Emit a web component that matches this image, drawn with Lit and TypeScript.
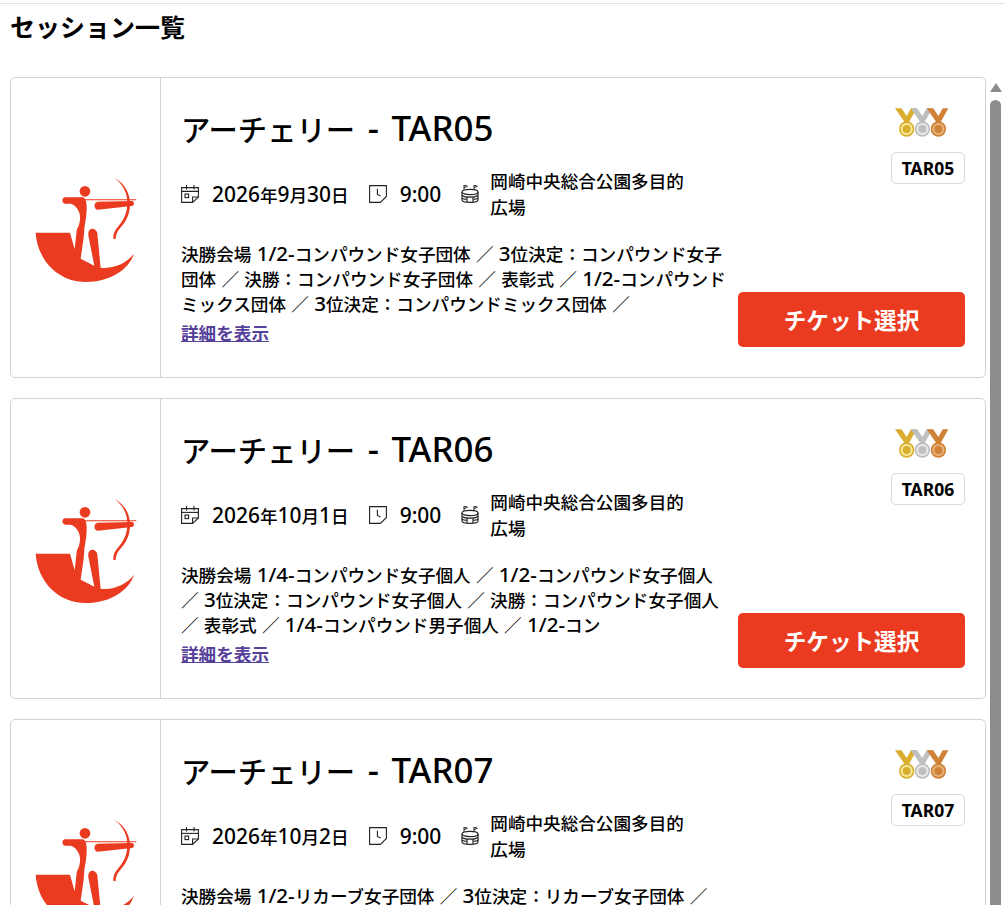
import { LitElement, html, css, svg } from "lit";
import { customElement } from "lit/decorators.js";

const sessions = [
  {
    code: "TAR05",
    date: "2026年9月30日",
    desc: "決勝会場 1/2-コンパウンド女子団体 ／ 3位決定：コンパウンド女子団体 ／ 決勝：コンパウンド女子団体 ／ 表彰式 ／ 1/2-コンパウンドミックス団体 ／ 3位決定：コンパウンドミックス団体 ／",
  },
  {
    code: "TAR06",
    date: "2026年10月1日",
    desc: "決勝会場 1/4-コンパウンド女子個人 ／ 1/2-コンパウンド女子個人 ／ 3位決定：コンパウンド女子個人 ／ 決勝：コンパウンド女子個人 ／ 表彰式 ／ 1/4-コンパウンド男子個人 ／ 1/2-コン",
  },
  {
    code: "TAR07",
    date: "2026年10月2日",
    desc: "決勝会場 1/2-リカーブ女子団体 ／ 3位決定：リカーブ女子団体 ／ 決勝：リカーブ女子団体 ／ 表彰式 ／ 1/2-リカーブ男子団体 ／ 3位決定：リカーブ男子団体 ／",
  },
];

/* The reference's Latin glyphs run larger than its kana and kanji, so Latin tokens get their own size. */
const mixed = (text: string) =>
  text
    .split(/([!-~]+)/)
    .filter((part) => part)
    .map((part) => (/^[!-~]/.test(part) ? html`<span class="lat">${part}</span>` : part));

const logo = svg`<svg class="logo" viewBox="100 50 310 322" fill="#ea3a20">
  <circle cx="253" cy="96" r="16"/>
  <path d="M105 220H208L222 270L228 215C229 208 231 205 233 202C238 190 240 175 236 160C232 148 222 136 210 133H194C183 133 182 114 194 114H245C254 114 257 125 258 140C259 160 255 185 251 205C251 210 251 218 249 235L240 298L281 319L263 228C260 203 286 203 290 222L300 325C340 330 380 310 400 283C385 330 330 368 255 368C170 368 110 300 105 220Z"/>
  <path d="M291 127L394 125C402 125 402 139 394 140L292 151C278 151 278 128 291 127Z"/>
  <path d="M250 120H407V123H250Z"/>
  <path d="M342 55C375 75 390 105 388 140C386 170 374 190 357 208C349 217 345 228 345 240L338 238C337 225 342 212 352 202C368 184 378 165 380 138C382 105 370 78 342 55Z"/>
</svg>`;

const calendar = svg`<svg class="ico" viewBox="0 0 18 18" fill="none" stroke="#222" stroke-width="1.1">
  <path d="M.6 2.6H17.4V12L11.6 17.4H.6Z"/><path d="M.6 6.4H17.4"/><path d="M5.5 0V4.4M13 0V4.4"/>
  <rect x="4" y="9" width="3.6" height="3.6"/><path d="M11.6 17.4V12H17.4"/>
</svg>`;

const clock = svg`<svg class="ico" viewBox="0 0 18 18" fill="none" stroke="#222" stroke-width="1.1">
  <path d="M.6.6H17.4V11.4L11.4 17.4H.6Z"/><path d="M8.4 3.8V9.4L11.6 11"/>
</svg>`;

const stadium = svg`<svg class="ico" viewBox="0 0 18 18" fill="none" stroke="#222" stroke-width="1.2">
  <path d="M3 5V0L6.4 1.3L3 2.6M13 5V0L16.4 1.3L13 2.6" stroke-width="1"/>
  <ellipse cx="9" cy="7" rx="8" ry="2.6"/>
  <path d="M1 7V15C1 16.4 4 17.4 9 17.4S17 16.4 17 15V7"/>
  <path d="M1 10.4C3 11.8 6 12.2 9 12.2S15 11.8 17 10.4"/>
  <path d="M1 13.2C2 13.8 3.5 14.2 5.5 14.4M17 13.2C16 13.8 14.5 14.2 12.5 14.4"/>
  <path d="M6 12.2V17M12 12.2V17"/>
</svg>`;

const medal = (x: number, c: string, ring: string) => svg`
  <path d="M${x - 11.7} 1.3H${x - 5.2}L${x} 9L${x + 4.3} 1.3H${x + 10}L${x + 2.3} 15H${x - 2.2}Z" fill=${c}/>
  <circle cx=${x} cy="22" r="7.7" fill=${c}/>
  <circle cx=${x} cy="22" r="6.1" fill=${ring}/>
  <circle cx=${x} cy="22" r="4" fill=${c}/>`;

const medals = svg`<svg class="medals" viewBox="0 0 56 30">
  ${medal(12.7, "#d9ad2e", "#f6ea9c")}
  ${medal(28.4, "#bfbfbf", "#e9e9e9")}
  ${medal(44.4, "#cf8136", "#e6b27c")}
</svg>`;

@customElement("app-root")
export class AppRoot extends LitElement {
  static styles = css`
    :host {
      display: block;
      height: 905px;
      overflow: hidden;
      position: relative;
      background: #fff;
      color: #000;
      font-family: "Noto Sans", "Noto Sans CJK JP", sans-serif;
    }
    .lat {
      display: inline-block;
      font-size: 1.17em;
      line-height: 1;
    }
    .page {
      border-top: 1px solid #e3e3e3;
      margin-top: 3px;
      padding: 0 19px 0 10px;
    }
    h1 {
      margin: 0;
      padding-top: 5px;
      height: 73px;
      box-sizing: border-box;
      font-size: 25px;
      line-height: 36px;
      font-weight: 600;
    }
    .list {
      display: flex;
      flex-direction: column;
      gap: 20px;
    }
    .card {
      display: grid;
      grid-template-columns: 150px 1fr;
      height: 301px;
      box-sizing: border-box;
      border: 1px solid #d3d3d3;
      border-radius: 5px;
      overflow: hidden;
    }
    .left {
      border-right: 1px solid #d3d3d3;
      display: flex;
      align-items: center;
      justify-content: center;
      padding-top: 5px;
    }
    .logo {
      width: 103.3px;
      height: 107.3px;
    }
    .main {
      display: flex;
      padding: 0 20px 0 20px;
      gap: 10px;
    }
    .content {
      width: 547px;
      flex: none;
    }
    .title {
      margin: 29px 0 0;
      font-size: 29.3px;
      line-height: 46px;
      font-weight: 500;
      word-spacing: 5px;
    }
    .title .lat {
      font-size: 1.19em;
    }
    .meta {
      display: flex;
      align-items: center;
      margin-top: 15px;
      font-size: 17.6px;
      font-weight: 500;
    }
    .meta .lat {
      font-size: 1.19em;
    }
    .meta .item {
      display: flex;
      align-items: center;
      gap: 13px;
      margin-right: 20px;
    }
    .ico {
      width: 18px;
      height: 18px;
      flex: none;
    }
    .venue {
      display: flex;
      align-items: center;
      gap: 11px;
    }
    .venue span {
      width: 200px;
      line-height: 26px;
    }
    .desc {
      margin: 22px 0 0;
      font-size: 17.6px;
      line-height: 25px;
      width: 547px;
      font-weight: 500;
      word-spacing: 0.7px;
    }
    .more {
      display: inline-block;
      margin-top: 4px;
      font-size: 17.6px;
      line-height: 25px;
      font-weight: 700;
      color: #55409a;
      text-decoration: underline;
    }
    .side {
      flex: 1;
      min-width: 0;
      display: flex;
      flex-direction: column;
      align-items: flex-end;
    }
    .medals {
      width: 56px;
      height: 30px;
      margin: 29px 15px 0 0;
    }
    .tag {
      margin-top: 15px;
      width: 74px;
      height: 32px;
      box-sizing: border-box;
      border: 1px solid #d9d9d9;
      border-radius: 5px;
      display: flex;
      align-items: center;
      justify-content: center;
      font-size: 17.5px;
      font-weight: 700;
    }
    .buy {
      margin-top: auto;
      margin-bottom: 30px;
      width: 227px;
      height: 55px;
      border: 0;
      border-radius: 5px;
      background: #ea3a20;
      color: #fff;
      font: inherit;
      font-size: 22.6px;
      font-weight: 700;
    }
    .sb-arrow {
      position: absolute;
      left: 990px;
      top: 83px;
      width: 0;
      height: 0;
      border-left: 6px solid transparent;
      border-right: 6px solid transparent;
      border-bottom: 9px solid #8c8c8c;
    }
    .sb-thumb {
      position: absolute;
      left: 990px;
      top: 100px;
      width: 11px;
      height: 820px;
      border-radius: 5.5px;
      background: #8c8c8c;
    }
  `;

  render() {
    return html`
      <div class="page">
        <h1>セッション一覧</h1>
        <div class="list">
          ${sessions.map(
            (s) => html`
              <article class="card">
                <div class="left">${logo}</div>
                <div class="main">
                  <div class="content">
                    <h2 class="title">${mixed(`アーチェリー - ${s.code}`)}</h2>
                    <div class="meta">
                      <div class="item">${calendar}<span>${mixed(s.date)}</span></div>
                      <div class="item">${clock}<span class="lat">9:00</span></div>
                      <div class="venue">${stadium}<span>岡崎中央総合公園多目的広場</span></div>
                    </div>
                    <p class="desc">${mixed(s.desc)}</p>
                    <a class="more">詳細を表示</a>
                  </div>
                  <div class="side">
                    ${medals}
                    <div class="tag">${s.code}</div>
                    <button class="buy">チケット選択</button>
                  </div>
                </div>
              </article>
            `
          )}
        </div>
      </div>
      <div class="sb-arrow"></div>
      <div class="sb-thumb"></div>
    `;
  }
}
